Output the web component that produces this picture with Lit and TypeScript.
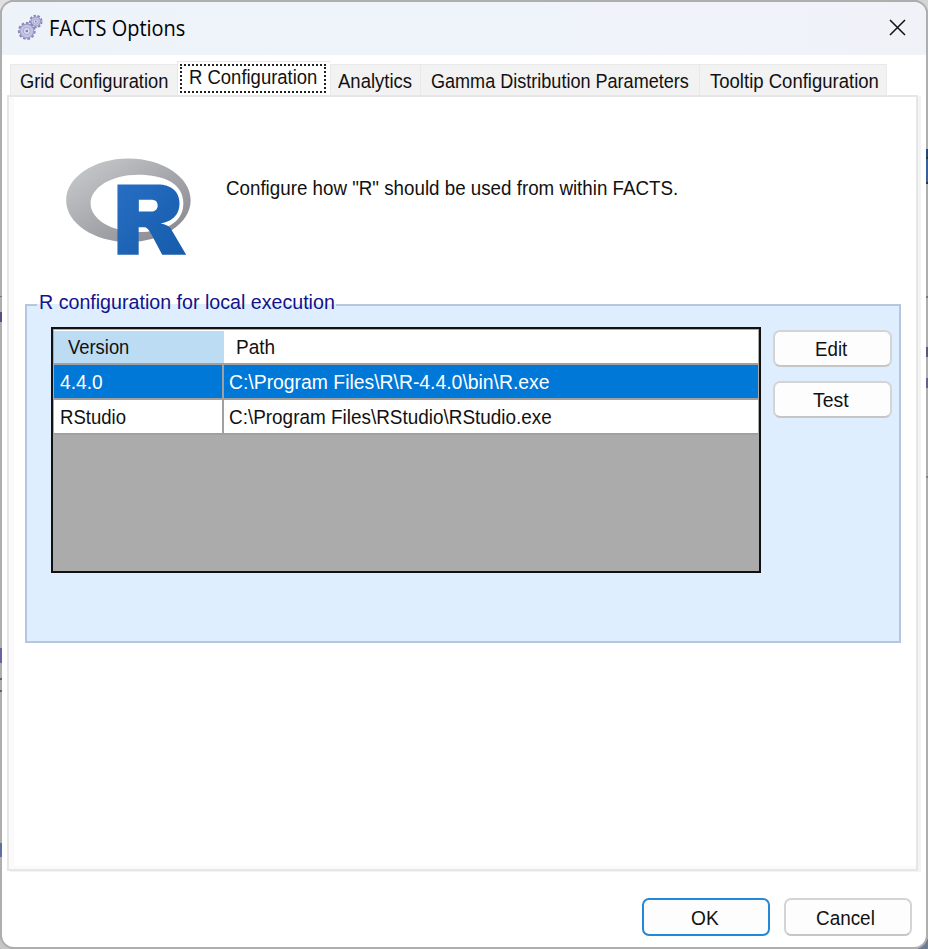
import { LitElement, html, css, svg } from "lit";
import { customElement, property, query } from "lit/decorators.js";

/** A line of text condensed or widened horizontally to a given width. */
@customElement("fit-label")
class FitLabel extends LitElement {
  static styles = css`
    :host { display: inline-block; white-space: pre; line-height: 24px; height: 24px; text-align: left; }
    .text { display: inline-block; transform-origin: 0 50%; }
  `;
  @property() text = "";
  @property({ type: Number }) width = 0;
  @query(".text") span!: HTMLElement;

  render() {
    return html`<span class="text">${this.text}</span>`;
  }

  updated() {
    this.style.width = this.width + "px";
    this.span.style.transform = "scaleX(" + this.width / this.span.offsetWidth + ")";
  }
}

const tabs = [
  { name: "Grid Configuration", box: 167, text: 148 },
  { name: "R Configuration", box: 153, text: 128, active: true },
  { name: "Analytics", box: 90, text: 74 },
  { name: "Gamma Distribution Parameters", box: 279, text: 258 },
  { name: "Tooltip Configuration", box: 188, text: 169 },
];

const rows = [
  { version: "4.4.0", vw: 43, path: "C:\\Program Files\\R\\R-4.4.0\\bin\\R.exe", pw: 321, selected: true },
  { version: "RStudio", vw: 66, path: "C:\\Program Files\\RStudio\\RStudio.exe", pw: 323, selected: false },
];

const gear = (cx: number, cy: number, r: number, teeth: number) => {
  const step = (2 * Math.PI * r) / teeth;
  return svg`
    <circle cx=${cx} cy=${cy} r=${r} fill="none" stroke="#8585b6" stroke-width="2.2"
      stroke-dasharray="${step * 0.6} ${step * 0.4}"></circle>
    <circle cx=${cx} cy=${cy} r=${r - 0.9} fill="#c3c3e2" stroke="#9c9cca" stroke-width="1.2"></circle>
    <circle cx=${cx} cy=${cy} r=${r * 0.45} fill="#dcdcf0" stroke="#a9a9d2" stroke-width="1"></circle>
    <circle cx=${cx} cy=${cy} r=${r * 0.17} fill="#8080b4"></circle>`;
};

@customElement("app-root")
class AppRoot extends LitElement {
  static styles = css`
    :host {
      display: block; box-sizing: border-box; width: 928px; height: 949px;
      padding: 2px 2px 2px; overflow: hidden; position: relative;
      background: #ababab;
      font: 20.5px "Liberation Sans", Arial, sans-serif; color: #111;
    }
    * { box-sizing: border-box; }
    .corner { position: absolute; width: 10px; height: 10px; }
    .tl { left: 0; top: 0; background: #e0e0e0; }
    .tr { right: 0; top: 0; background: #d5d5d5; }
    .bl { left: 0; bottom: 0; background: #c6c6c6; }
    .br { right: 0; bottom: 0; background: #6e7b93; }
    .edge { position: absolute; top: 0; bottom: 0; width: 2px; }
    .edge.right {
      right: 0;
      background: linear-gradient(transparent 149px, #26497f 149px 157px, #333 157px 159px, #3a5f9c 159px 182px, #333 182px 184px,
        transparent 184px 296px, #777 296px 298px, transparent 298px 347px, #5d5878 347px 357px,
        transparent 357px 378px, #62628c 378px 388px, transparent 388px 476px, #8d8064 476px 478px, transparent 478px);
    }
    .edge.left {
      left: 0;
      background: linear-gradient(transparent 296px, #777 296px 297px, transparent 297px 312px, #5b4c82 312px 322px,
        transparent 322px 648px, #6464a4 648px 663px, transparent 663px 678px, #7c5878 678px 680px,
        transparent 680px 690px, #7c5878 690px 692px, transparent 692px 843px, #5f6ea4 843px 857px, transparent 857px);
    }
    .frame {
      position: relative; width: 924px; height: 945px; background: #fff;
      border-radius: 12px; box-shadow: 0 0 0 2px #aeaeae; overflow: hidden;
      display: flex; flex-direction: column;
    }
    .title {
      height: 53px; flex: none; display: flex; align-items: center; padding: 0 20px 2px 15px;
      background: linear-gradient(90deg, #eef3fa, #eff3fa 60%, #f0f2f8);
      font-family: "Open Sans", "Noto Sans", sans-serif; color: #000;
    }
    .title .gears { width: 27px; height: 28px; margin-right: 5px; display: block; }
    .title fit-label { font-size: 21px; }
    .grow { flex: 1; }
    .close { width: 17px; height: 17px; display: block; }
    .tabs { display: flex; align-items: flex-end; height: 40px; padding-left: 8px; flex: none; }
    .tab {
      height: 31px; display: flex; justify-content: center; align-items: center; flex: none;
      background: #f2f2f2; border: 1px solid #e9e9e9; border-right: 0; border-bottom: 0;
      padding: 2px 0 0 0;
    }
    .tab:last-child { border-right: 1px solid #e9e9e9; padding-left: 2px; }
    .tab:nth-child(3) { padding-right: 2px; }
    .tab.active { height: 34px; background: #fff; padding: 0 2px 0 0; }
    .focus {
      width: 146px; height: 29px; border: 2px dotted #222; display: flex; justify-content: center;
      align-items: center; padding: 0 0 3px 0;
    }
    .page {
      margin: 0 8px 0 5px; height: 776px; flex: none; background: #fff; border: 2px solid #e6e6e6;
      box-shadow: inset 5px -3px 0 #fafafa, 3px 1px 0 #f4f4f4;
      padding: 59px 12px 0 16px;
    }
    .intro { display: flex; padding-left: 41px; height: 148px; }
    .intro .logo { width: 125px; height: 97px; display: block; margin-top: 2px; }
    .intro fit-label { margin: 20px 0 0 35px; }
    .group {
      height: 339px; width: 876px; background: #deeefe; border: 2px solid #b4c7dc;
      padding: 0 7px 0 24px;
    }
    .caption {
      margin: -16px 0 0 -14px; width: 299px; padding-left: 2px; height: 24px; color: #12128b;
      background: linear-gradient(#fff 0 14px, #deeefe 14px);
    }
    .body { display: flex; justify-content: space-between; margin-top: 13px; }
    .grid { width: 710px; height: 246px; border: 2px solid #111; background: #ababab; padding: 1px; }
    .row { display: grid; grid-template-columns: 170px 1fr; height: 35px; background: #fff; border-bottom: 2px solid #a0a0a0; }
    .row.head { border-top: 1px solid #fff; }
    .cell { display: flex; align-items: center; padding-left: 5.5px; border-right: 2px solid #a0a0a0; }
    .cell:last-child { border-right: 0; padding-left: 4.5px; }
    .head .cell { padding-left: 14px; background: #bcdcf3; border-color: #bcdcf3; }
    .head .cell:last-child { background: #fff; padding-left: 12px; }
    .row.selected { background: #0078d7; color: #fff; }
    .side { display: flex; flex-direction: column; gap: 14px; padding-top: 3px; }
    .button {
      width: 119px; height: 37px; border: 2px solid #d4d4d4; border-bottom-color: #c6c6c6;
      border-radius: 7px; background: #fdfdfd; display: flex; align-items: center;
      justify-content: center; padding: 0 4px 0 0; font: inherit; color: inherit; flex: none;
    }
    .footer { display: flex; justify-content: flex-end; gap: 14px; padding: 27px 14px 0 0; }
    .footer .button { width: 128px; height: 38px; padding: 1px 5px 0 0; }
    .footer .primary { border-color: #2388d8; padding-right: 3px; }
  `;

  render() {
    return html`
      <div class="corner tl"></div><div class="corner tr"></div>
      <div class="corner bl"></div><div class="corner br"></div>
      <div class="frame">
        <div class="title">
          <svg class="gears" viewBox="0 0 27 28">${gear(18.8, 7.5, 5.6, 9)}${gear(9.8, 17, 7.8, 11)}</svg>
          <fit-label text="FACTS Options" width="136"></fit-label>
          <span class="grow"></span>
          <svg class="close" viewBox="0 0 17 17"><path d="M1 1 16 16M16 1 1 16" stroke="#111" stroke-width="1.5"/></svg>
        </div>
        <div class="tabs">
          ${tabs.map((t) => html`
            <div class="tab ${t.active ? "active" : ""}" style="width:${t.box}px">
              ${t.active
                ? html`<div class="focus"><fit-label text=${t.name} width=${t.text}></fit-label></div>`
                : html`<fit-label text=${t.name} width=${t.text}></fit-label>`}
            </div>`)}
        </div>
        <div class="page">
          <div class="intro">
            <svg class="logo" viewBox="0 0 724 561" preserveAspectRatio="none">
              <defs>
                <linearGradient id="ring" x1="0" y1="0" x2="1" y2="1">
                  <stop offset="0" stop-color="#cbced0"/><stop offset="1" stop-color="#84838b"/>
                </linearGradient>
                <linearGradient id="letter" x1="0" y1="0" x2="1" y2="1">
                  <stop offset="0" stop-color="#276dc3"/><stop offset="1" stop-color="#165caa"/>
                </linearGradient>
              </defs>
              <path fill="url(#ring)" fill-rule="evenodd" d="M361.453,485.937C162.329,485.937 0.906,377.828 0.906,244.469C0.906,111.109 162.329,3 361.453,3C560.578,3 722,111.109 722,244.469C722,377.828 560.578,485.937 361.453,485.937ZM416.641,97.406C265.289,97.406 142.594,171.314 142.594,262.484C142.594,353.654 265.289,427.562 416.641,427.562C567.992,427.562 679.687,377.033 679.687,262.484C679.687,147.971 567.992,97.406 416.641,97.406Z"/>
              <path fill="url(#letter)" fill-rule="evenodd" d="M550,377C550,377 571.822,383.585 584.5,390C588.899,392.226 596.51,396.668 602,402.5C607.378,408.212 610,414 610,414L696,559L557,559.062L492,437C492,437 478.69,414.131 470.5,407.5C463.668,401.969 460.755,400 454,400L420.974,400L421,558.974L298,559.026L298,152.938L545,152.938C545,152.938 657.5,154.967 657.5,262C657.5,369.033 550,377 550,377ZM496.5,241.024L422.037,240.976L422,310.026L496.5,310.002C496.5,310.002 531,309.895 531,274.877C531,239.155 496.5,241.024 496.5,241.024Z"/>
            </svg>
            <fit-label text='Configure how "R" should be used from within FACTS.' width="452"></fit-label>
          </div>
          <div class="group">
            <div class="caption"><fit-label text="R configuration for local execution" width="296"></fit-label></div>
            <div class="body">
              <div class="grid">
                <div class="row head">
                  <div class="cell"><fit-label text="Version" width="61"></fit-label></div>
                  <div class="cell"><fit-label text="Path" width="39"></fit-label></div>
                </div>
                ${rows.map((r) => html`
                  <div class="row ${r.selected ? "selected" : ""}">
                    <div class="cell"><fit-label text=${r.version} width=${r.vw}></fit-label></div>
                    <div class="cell"><fit-label text=${r.path} width=${r.pw}></fit-label></div>
                  </div>`)}
              </div>
              <div class="side">
                <button class="button"><fit-label text="Edit" width="32"></fit-label></button>
                <button class="button"><fit-label text="Test" width="36"></fit-label></button>
              </div>
            </div>
          </div>
        </div>
        <div class="footer">
          <button class="button primary"><fit-label text="OK" width="28"></fit-label></button>
          <button class="button"><fit-label text="Cancel" width="59"></fit-label></button>
        </div>
      </div>
      <div class="edge left"></div><div class="edge right"></div>`;
  }
}
